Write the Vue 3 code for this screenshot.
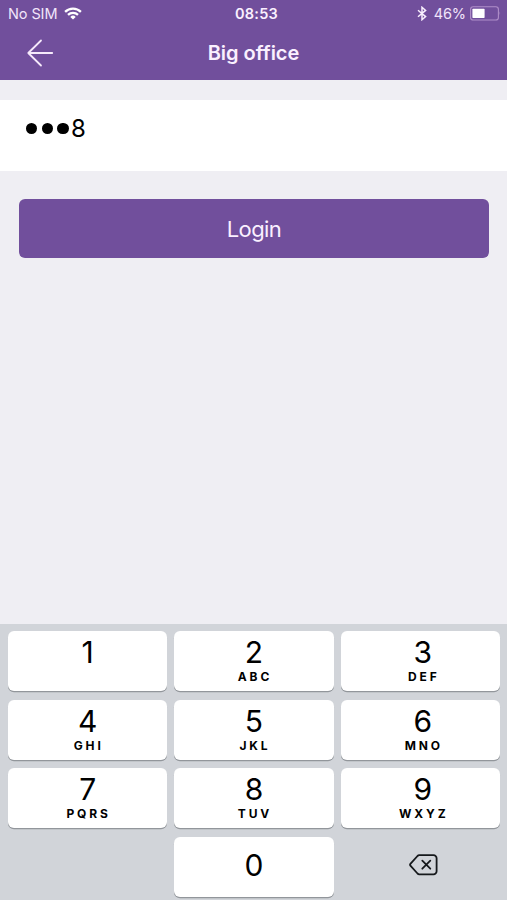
<script setup>
const keys = [
  { digit: '1', letters: '' },
  { digit: '2', letters: 'ABC' },
  { digit: '3', letters: 'DEF' },
  { digit: '4', letters: 'GHI' },
  { digit: '5', letters: 'JKL' },
  { digit: '6', letters: 'MNO' },
  { digit: '7', letters: 'PQRS' },
  { digit: '8', letters: 'TUV' },
  { digit: '9', letters: 'WXYZ' },
]
</script>

<template>
  <div class="screen">
    <header class="header">
      <div class="status">
        <div class="status-left">
          <span class="carrier">No SIM</span>
          <svg class="wifi" width="18" height="13" viewBox="0 0 18 13" fill="none" stroke="#fff" stroke-width="2.3">
            <path d="M1.1 4.8a11.4 11.4 0 0 1 15.8 0" />
            <path d="M4 7.9a7.2 7.2 0 0 1 10 0" />
            <path d="M9 12.6 6.3 9.9a3.9 3.9 0 0 1 5.4 0z" fill="#fff" stroke="none" />
          </svg>
        </div>
        <div class="clock">08:53</div>
        <div class="status-right">
          <svg class="bluetooth" width="10" height="15" viewBox="0 0 10 15" fill="none" stroke="#f8effd" stroke-width="1.5">
            <path d="M1 4.2 8.6 10.6 5 13.7V1.3l3.6 3.1L1 10.8" />
          </svg>
          <span class="percent">46%</span>
          <svg class="battery" width="31" height="15" viewBox="0 0 31 15">
            <rect x=".6" y=".8" width="27.8" height="13.2" rx="2.6" fill="none" stroke="#b08fc9" stroke-width="1.1" />
            <rect x="2.4" y="2.8" width="12.2" height="9.2" rx=".7" fill="#fff" />
            <path d="M29.6 5.2q1.3 2.2 0 4.4z" fill="#b08fc9" />
          </svg>
        </div>
      </div>
      <div class="nav">
        <svg class="back" width="27" height="28" viewBox="0 0 27 28" fill="none" stroke="#f6eafb" stroke-width="1.8" stroke-linecap="round" stroke-linejoin="round">
          <path d="M14 1.5 1.3 14 14 26.5M1.3 14H25.2" />
        </svg>
        <h1 class="title">Big office</h1>
        <span></span>
      </div>
    </header>

    <div class="field">
      <i v-for="n in 3" :key="n" class="dot"></i>
      <span class="typed">8</span>
    </div>

    <button class="login">Login</button>

    <div class="keypad">
      <button v-for="key in keys" :key="key.digit" class="key">
        <span class="digit">{{ key.digit }}</span>
        <span class="letters">{{ key.letters }}</span>
      </button>
      <span></span>
      <button class="key zero"><span class="digit">0</span></button>
      <div class="delete">
        <svg width="29" height="22" viewBox="0 0 29 22" fill="none" stroke="#15181b" stroke-width="1.8" stroke-linejoin="round" stroke-linecap="round">
          <path d="M10.2 1.2h14.3a3.1 3.1 0 0 1 3.1 3.1v12.9a3.1 3.1 0 0 1-3.1 3.1H10.2Q9.3 20.3 8.5 19.5L1.4 11.700Q.7 10.800 1.400 9.900L8.500 2Q9.300 1.200 10.200 1.200z" />
          <path d="m13.300 6.700 8 8m0-8-8 8" />
        </svg>
      </div>
    </div>
  </div>
</template>

<style>
body {
  margin: 0;
}
</style>

<style scoped>
.screen {
  display: flex;
  flex-direction: column;
  width: 507px;
  height: 900px;
  overflow: hidden;
  background: #efeef3;
  font-family: Inter, "Liberation Sans", sans-serif;
}
button {
  border: 0;
  padding: 0;
  font-family: inherit;
}
.header {
  height: 80px;
  background: #714f9c;
  color: #faf0ff;
}
.status {
  display: grid;
  grid-template-columns: 1fr auto 1fr;
  align-items: center;
  height: 27px;
  padding: 0 6px 0 8px;
  font-size: 14.5px;
  line-height: 27px;
}
.status-left,
.status-right {
  display: flex;
  align-items: center;
  color: #f1e4fa;
}
.status-left {
  gap: 6px;
}
.carrier {
  width: 50px;
  letter-spacing: -0.1px;
  white-space: nowrap;
}
.status-right {
  justify-content: flex-end;
}
.clock {
  padding-left: 4px;
  font-weight: 600;
  letter-spacing: 0.2px;
}
.percent {
  margin: 0 4px 0 7px;
  letter-spacing: -0.1px;
}
.nav {
  display: grid;
  grid-template-columns: 1fr auto 1fr;
  align-items: center;
  height: 50px;
}
.back {
  margin-left: 27px;
}
.title {
  margin: 0;
  padding-top: 1px;
  font-size: 20px;
  font-weight: 600;
  line-height: 50px;
}
.field {
  display: flex;
  align-items: center;
  height: 71px;
  margin-top: 20px;
  padding: 0 26px 14px;
  box-sizing: border-box;
  background: #fff;
}
.dot {
  width: 11.4px;
  height: 11.4px;
  margin-right: 4.3px;
  border-radius: 50%;
  background: #000;
}
.typed {
  margin-left: -2px;
  padding-top: 1px;
  font-size: 24px;
  line-height: 30px;
}
.login {
  height: 59px;
  margin: 28px 18px 0 19px;
  border-radius: 6px;
  background: #714f9c;
  color: #faf0ff;
  font-size: 22px;
  letter-spacing: -0.6px;
}
.keypad {
  display: grid;
  grid-template-columns: repeat(3, 1fr);
  grid-auto-rows: 60px;
  gap: 8.6px 7px;
  height: 276px;
  margin-top: auto;
  padding: 7px 7px 0 8px;
  box-sizing: border-box;
  background: #d1d4d9;
}
.key {
  display: flex;
  flex-direction: column;
  align-items: center;
  border-radius: 6px;
  background: #fff;
  box-shadow: 0 1.3px 0 #92969b;
  color: #000;
}
.key:nth-child(3n) {
  padding-left: 5px;
}
.digit {
  height: 36px;
  margin-top: 3px;
  font-size: 30px;
  font-weight: 400;
  line-height: 37px;
}
.letters {
  padding-left: 2px;
  font-size: 12px;
  font-weight: 700;
  line-height: 14px;
  letter-spacing: 2.9px;
}
.zero {
  justify-content: center;
}
.zero .digit {
  margin-top: -4px;
}
.delete {
  display: flex;
  align-items: center;
  justify-content: center;
  padding: 0 0 3px 7px;
}
</style>
